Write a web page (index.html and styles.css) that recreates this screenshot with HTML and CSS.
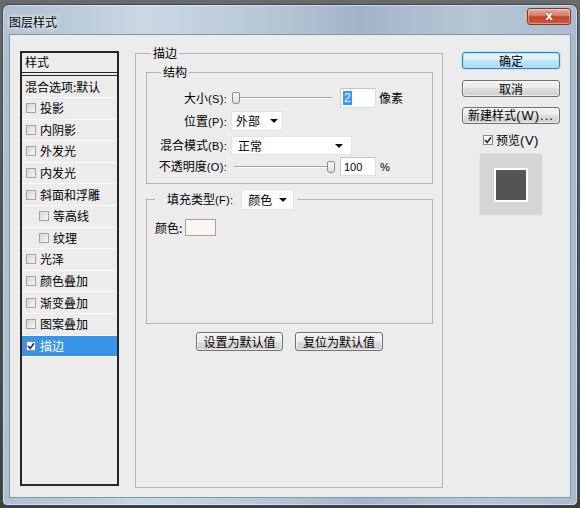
FILE: index.html
```html
<!DOCTYPE html>
<html lang="zh-CN">
<head>
<meta charset="utf-8">
<title>图层样式</title>
<link rel="stylesheet" href="styles.css">
</head>
<body>
<div class="window">
  <div class="titlebar">
    <span class="title">图层样式</span>
    <span class="close-btn">x</span>
  </div>
  <div class="client">
    <div class="style-list">
      <div class="list-head">样式</div>
      <div class="list-blend">混合选项:默认</div>
      <div class="list-item"><span class="cb"></span>投影</div>
      <div class="list-item"><span class="cb"></span>内阴影</div>
      <div class="list-item"><span class="cb"></span>外发光</div>
      <div class="list-item"><span class="cb"></span>内发光</div>
      <div class="list-item"><span class="cb"></span>斜面和浮雕</div>
      <div class="list-item sub"><span class="cb"></span>等高线</div>
      <div class="list-item sub"><span class="cb"></span>纹理</div>
      <div class="list-item"><span class="cb"></span>光泽</div>
      <div class="list-item"><span class="cb"></span>颜色叠加</div>
      <div class="list-item"><span class="cb"></span>渐变叠加</div>
      <div class="list-item"><span class="cb"></span>图案叠加</div>
      <div class="list-item selected"><span class="cb checked"><svg viewBox="0 0 8 8" width="8" height="8"><path d="M1 4 L3.2 6.4 L7 1.2" fill="none" stroke="#1f2a6b" stroke-width="1.7"/></svg></span>描边</div>
    </div>

    <fieldset class="group main-group">
      <legend class="main-legend">描边</legend>
      <fieldset class="group struct">
        <legend class="struct-legend">结构</legend>
        <div class="row">
          <span class="lbl">大小<span class="en">(S):</span></span>
          <div class="slider"><span class="thumb"></span></div>
          <div class="num"><span class="hl">2</span></div>
          <span class="unit">像素</span>
        </div>
        <div class="row">
          <span class="lbl">位置<span class="en">(P):</span></span>
          <div class="select sel-pos"><span>外部</span><i class="arrow"></i></div>
        </div>
        <div class="row row-mode">
          <span class="lbl">混合模式<span class="en">(B):</span></span>
          <div class="select sel-mode"><span>正常</span><i class="arrow"></i></div>
        </div>
        <div class="row row-opacity">
          <span class="lbl">不透明度<span class="en">(O):</span></span>
          <div class="slider end"><span class="thumb"></span></div>
          <div class="num"><span class="en-num">100</span></div>
          <span class="unit pct">%</span>
        </div>
      </fieldset>
      <fieldset class="group fill">
        <legend class="fill-legend"><span>填充类型<span class="en">(F):</span></span><span class="select sel-fill"><span>颜色</span><i class="arrow"></i></span></legend>
        <div class="color-row"><span>颜色:</span><span class="swatch"></span></div>
      </fieldset>
      <div class="btn-row">
        <button class="btn wide1">设置为默认值</button>
        <button class="btn wide2">复位为默认值</button>
      </div>
    </fieldset>

    <div class="side">
      <button class="btn side-btn default">确定</button>
      <button class="btn side-btn gap1">取消</button>
      <button class="btn side-btn gap2">新建样式<span class="en-big">(W)...</span></button>
      <div class="preview-row"><span class="cb checked"><svg viewBox="0 0 8 8" width="8" height="8"><path d="M1 4 L3.2 6.4 L7 1.2" fill="none" stroke="#1f2a6b" stroke-width="1.7"/></svg></span><span class="pv-text">预览<span class="en-big">(V)</span></span></div>
      <div class="preview-box"><span class="preview-sq"></span></div>
    </div>
  </div>
</div>
</body>
</html>
```

FILE: styles.css
```css
* { box-sizing: border-box; }
html, body { margin: 0; padding: 0; }
body {
  width: 580px;
  height: 508px;
  overflow: hidden;
  background: linear-gradient(#6a6a6a, #3e3e3e);
  font-family: "Noto Sans CJK SC", "Noto Sans", sans-serif;
  font-size: 12px;
  line-height: 16px;
  color: #000;
}

.window {
  margin: 4px 0 0 2px;
  width: 576px;
  height: 502px;
  border: 1px solid #3b4857;
  border-radius: 7px 7px 5px 5px;
  padding: 0 6px 7px;
  background: linear-gradient(90deg, #aebfd0 0%, #cbd8e4 25%, #bccbda 42%, #a2b5c8 62%, #b6c6d6 82%, #a9bbcd 100%);
  box-shadow: inset 0 0 0 1px rgba(255,255,255,0.45);
  display: flex;
  flex-direction: column;
}

.titlebar {
  height: 29px;
  display: flex;
  justify-content: space-between;
  align-items: flex-start;
}
.title {
  margin-top: 9px;
  text-shadow: 0 0 4px #fff, 0 0 8px rgba(255,255,255,0.8);
}
.close-btn {
  margin-top: 3px;
  width: 44px;
  height: 17px;
  border: 1px solid #7d3a30;
  border-radius: 3px;
  background: linear-gradient(#e9b1a3, #d67862 45%, #c3442b 52%, #cf5a3e 100%);
  box-shadow: inset 0 0 0 1px rgba(255,255,255,0.35);
  color: #fff;
  font: bold 12px/14px "DejaVu Sans", sans-serif;
  text-align: center;
  text-shadow: 0 0 2px #6a1a10;
}

.client {
  height: 464px;
  border: 1px solid #8396a9;
  background: #ececec;
  display: flex;
  align-items: flex-start;
  padding: 10px 0 0 10px;
}

/* left list */
.style-list {
  width: 99px;
  height: 435px;
  margin-top: 6px;
  border: 2px solid #262626;
  display: flex;
  flex-direction: column;
}
.list-head {
  height: 23px;
  border-bottom: 4px double #262626;
  padding: 1px 0 0 3px;
}
.list-blend {
  height: 22px;
  border-bottom: 1px solid #fafafa;
  padding-left: 3px;
  line-height: 21px;
}
.list-item {
  height: 21.6px;
  border-bottom: 1px solid #fafafa;
  display: flex;
  align-items: center;
  padding-left: 4px;
}
.list-item .cb { margin-right: 4px; }
.list-item.sub { padding-left: 17px; }
.list-item.selected {
  background: #3993e6;
  color: #fff;
}

.cb {
  width: 10px;
  height: 10px;
  border: 1px solid #a3a3a3;
  background: linear-gradient(135deg, #d6d6d6, #f6f6f6);
  display: inline-flex;
  align-items: center;
  justify-content: center;
  flex: none;
}
.cb.checked { background: #fff; border-color: #8a8a8a; }
.cb svg { display: block; }

/* fieldsets */
fieldset { margin: 0; min-width: 0; }
.group { border: 1px solid #b4b4b4; }
legend { padding: 0 2px; line-height: 16px; }

.main-group {
  width: 308px;
  height: 443px;
  margin-left: 16px;
  padding: 3px 9px 0 10px;
}
.main-legend { margin-left: 5px; }

.struct {
  padding: 8px 0 7px 0;
}
.struct-legend { margin-left: 14px; }

.row {
  height: 20px;
  display: flex;
  align-items: center;
}
.row + .row { margin-top: 3px; }
.row.row-mode { height: 19px; margin-top: 5px; }
.row.row-mode .select { height: 19px; }
.row.row-opacity { height: 19px; margin-top: 2px; }
.lbl {
  width: 80px;
  text-align: right;
  flex: none;
}
.en {
  font-family: "Liberation Sans", Arial, sans-serif;
  font-size: 11px;
  letter-spacing: 0.3px;
}

.slider {
  width: 104px;
  height: 20px;
  margin-left: 4px;
  display: flex;
  align-items: center;
  padding: 0 0 0 1px;
  background: linear-gradient(#a2a2a2 0 1px, #fdfdfd 1px 2px) center / 98px 2px no-repeat;
}
.slider.end { justify-content: flex-end; padding: 0; height: 19px; }
.thumb {
  width: 8px;
  height: 12px;
  border: 1px solid #8c8c8c;
  border-radius: 2px 2px 3px 3px;
  background: linear-gradient(#fdfdfd, #dcdcdc);
}

.num {
  width: 36px;
  height: 20px;
  margin-left: 5px;
  background: #fff;
  border: 1px solid #dedede;
  border-top-color: #c4c4c4;
  border-left-color: #cccccc;
  padding-left: 2px;
  display: flex;
  align-items: center;
}
.row-opacity .num { height: 19px; }
.hl {
  background: #3399ff;
  color: #fff;
  font-family: "Liberation Sans", Arial, sans-serif;
  font-size: 12px;
  line-height: 14px;
  padding: 0 1px;
}
.en-num {
  font-family: "Liberation Sans", Arial, sans-serif;
  font-size: 11px;
  padding-left: 1px;
}
.unit { margin-left: 3px; }
.unit.pct {
  margin-left: 4px;
  font-family: "Liberation Sans", Arial, sans-serif;
  font-size: 11px;
}

.select {
  height: 20px;
  margin-left: 4px;
  background: #fff;
  border: 1px solid #e4e4e4;
  display: flex;
  align-items: center;
  justify-content: space-between;
  padding: 0 4px 0 4px;
}
.sel-pos { width: 52px; }
.sel-mode { width: 121px; padding: 0 8px 0 6px; }
.arrow {
  width: 0;
  height: 0;
  border-left: 4px solid transparent;
  border-right: 4px solid transparent;
  border-top: 4px solid #111;
}

.fill {
  height: 135px;
  margin-top: 5px;
  padding: 9px 0 0 8px;
}
.fill-legend {
  margin-left: 0;
  padding: 0 4px 0 12px;
  height: 21px;
  display: flex;
  align-items: center;
}
.sel-fill {
  width: 53px;
  height: 21px;
  margin-left: 8px;
  padding: 0 6px 0 6px;
}
.color-row {
  height: 17px;
  display: flex;
  align-items: center;
}
.swatch {
  width: 31px;
  height: 17px;
  margin-left: 3px;
  background: #f8f6ef;
  border: 1px solid #a2a2a2;
}

.btn {
  height: 19px;
  padding: 0;
  border: 1px solid #707070;
  border-radius: 3px;
  background: linear-gradient(#f3f3f3 0%, #ebebeb 50%, #dddddd 50%, #cfcfcf 100%);
  box-shadow: inset 0 0 0 1px rgba(255,255,255,0.6);
  font: inherit;
  line-height: 16px;
  color: #000;
}
.btn-row {
  margin-top: 8px;
  display: flex;
  justify-content: center;
  gap: 12px;
}
.wide1 { width: 87px; }
.wide2 { width: 88px; }

/* right column */
.side {
  width: 98px;
  margin-left: 19px;
  margin-top: 7px;
  display: flex;
  flex-direction: column;
}
.side-btn { height: 17px; line-height: 14px; }
.side-btn.default {
  border-color: #3c7fb1;
  background: linear-gradient(#eaf6fd, #d9f0fc 50%, #bee6fd 50%, #a7d9f5);
  box-shadow: inset 0 0 0 1px #a9e6fd, 0 0 2px #6cc8f2;
}
.gap1 { margin-top: 11px; }
.gap2 { margin-top: 10px; }
.en-big {
  font-family: "Liberation Sans", Arial, sans-serif;
  font-size: 13px;
  letter-spacing: 1px;
}
.preview-row {
  margin-top: 9px;
  height: 14px;
  display: flex;
  justify-content: center;
  align-items: center;
  gap: 3px;
}
.pv-text .en-big { letter-spacing: 0.5px; }
.preview-box {
  align-self: center;
  margin-top: 6px;
  width: 64px;
  height: 63px;
  background: #d6d6d6;
  border: 1px solid #e6e6e6;
  display: flex;
  align-items: center;
  justify-content: center;
}
.preview-sq {
  width: 34px;
  height: 34px;
  background: #545454;
  border: 2px solid #fff;
}
```
